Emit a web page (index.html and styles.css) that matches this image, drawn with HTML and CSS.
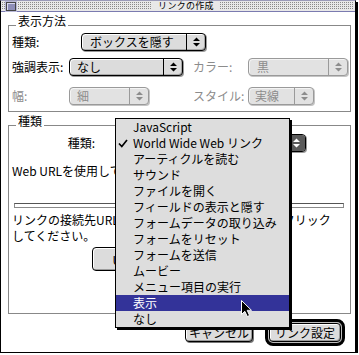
FILE: index.html
```html
<!DOCTYPE html>
<html lang="ja">
<head>
<meta charset="utf-8">
<title>リンクの作成</title>
<link rel="stylesheet" href="styles.css">
</head>
<body>
<div class="window">
  <div class="titlebar">
    <span class="dots dots-left"></span>
    <span class="closebox"></span>
    <span class="dots"></span>
    <span class="title">リンクの作成</span>
    <span class="dots"></span>
  </div>

  <div class="group g1">
    <div class="legend">表示方法</div>
    <div class="box box1">
      <div class="row">
        <span class="lbl w69">種類:</span>
        <div class="popup w125"><span class="pv">ボックスを隠す</span><span class="pa"><svg width="7" height="10" viewBox="0 0 7 10"><path d="M0 4 L3.5 0.5 L7 4Z M0 6 L3.5 9.5 L7 6Z"/></svg></span></div>
      </div>
      <div class="row r2">
        <span class="lbl w57">強調表示:</span>
        <div class="popup w114"><span class="pv pv7">なし</span><span class="pa"><svg width="7" height="10" viewBox="0 0 7 10"><path d="M0 4 L3.5 0.5 L7 4Z M0 6 L3.5 9.5 L7 6Z"/></svg></span></div>
        <span class="lbl dis-t w55 ml10">カラー:</span>
        <div class="popup dis w100"><span class="pv">黒</span><span class="pa"><svg width="7" height="10" viewBox="0 0 7 10"><path d="M0 4 L3.5 0.5 L7 4Z M0 6 L3.5 9.5 L7 6Z"/></svg></span></div>
      </div>
      <div class="row r3">
        <span class="lbl dis-t w57">幅:</span>
        <div class="popup dis w80"><span class="pv pv7">細</span><span class="pa"><svg width="7" height="10" viewBox="0 0 7 10"><path d="M0 4 L3.5 0.5 L7 4Z M0 6 L3.5 9.5 L7 6Z"/></svg></span></div>
        <span class="lbl dis-t w55 ml44">スタイル:</span>
        <div class="popup dis w66"><span class="pv pv6">実線</span><span class="pa"><svg width="7" height="10" viewBox="0 0 7 10"><path d="M0 4 L3.5 0.5 L7 4Z M0 6 L3.5 9.5 L7 6Z"/></svg></span></div>
      </div>
    </div>
  </div>

  <div class="group g2">
    <div class="legend">種類</div>
    <div class="box box2">
      <div class="row">
        <span class="lbl lbl-r">種類:</span>
        <div class="popup pressed w190"><span class="pv">World Wide Web リンク</span><span class="pa"><svg width="7" height="10" viewBox="0 0 7 10"><path d="M0 4 L3.5 0.5 L7 4Z M0 6 L3.5 9.5 L7 6Z"/></svg></span></div>
      </div>
      <div class="desc">Web URLを使用してリンクを作成</div>
      <div class="field"></div>
      <div class="note">リンクの接続先URLを入力するか、[選択]ボタンをクリック<br>してください。</div>
      <div class="btn inner-btn">URLを編集...</div>
    </div>
  </div>

  <div class="bottom">
    <div class="btn cancel">キャンセル</div>
    <div class="ring"><div class="btn ok">リンク設定</div></div>
  </div>

  <div class="menu">
    <div class="mi"><span class="mk"></span>JavaScript</div>
    <div class="mi"><span class="mk"><svg width="10" height="9" viewBox="0 0 10 9"><polyline points="1,4.5 3.8,7.5 9,1" fill="none" stroke="#000" stroke-width="1.7"/></svg></span>World Wide Web リンク</div>
    <div class="mi"><span class="mk"></span>アーティクルを読む</div>
    <div class="mi"><span class="mk"></span>サウンド</div>
    <div class="mi"><span class="mk"></span>ファイルを開く</div>
    <div class="mi"><span class="mk"></span>フィールドの表示と隠す</div>
    <div class="mi"><span class="mk"></span>フォームデータの取り込み</div>
    <div class="mi"><span class="mk"></span>フォームをリセット</div>
    <div class="mi"><span class="mk"></span>フォームを送信</div>
    <div class="mi"><span class="mk"></span>ムービー</div>
    <div class="mi"><span class="mk"></span>メニュー項目の実行</div>
    <div class="mi sel"><span class="mk"></span>表示</div>
    <div class="mi"><span class="mk"></span>なし</div>
  </div>

  <svg class="cursor" width="13" height="19" viewBox="0 0 13 19"><path d="M1.5 1.5 V15.5 L4.8 12.3 L7.3 17.5 L9.6 16.5 L7.2 11.3 H11.5 Z" fill="#000" stroke="#fff" stroke-width="1" stroke-linejoin="miter"/></svg>
</div>
</body>
</html>
```

FILE: styles.css
```css
body {
  margin: 0;
  background: #fff;
  font-family: "Noto Sans CJK JP", "Noto Sans", sans-serif;
  font-size: 12px;
  color: #000;
}

.window {
  position: relative;
  box-sizing: border-box;
  width: 356px;
  height: 353px;
  border: 1px solid #000;
  border-top-color: #9a9ab8;
  box-shadow: 2px 2px 0 #000;
  background: #fff;
}

/* title bar */
.titlebar {
  display: flex;
  align-items: center;
  height: 10px;
  border-bottom: 1px solid #7b7bb0;
  background: #e8e8e8;
  padding: 0 1px;
}
.dots {
  flex: 1;
  height: 8px;
  background:
    linear-gradient(90deg, transparent 1px, #e8e8e8 1px) 0 0 / 2px 2px,
    linear-gradient(#8a8a8a 1px, #e8e8e8 1px) 0 0 / 2px 2px;
}
.dots-left {
  flex: 0 0 3px;
}
.closebox {
  box-sizing: border-box;
  width: 10px;
  height: 9px;
  margin: 0 2px 0 1px;
  border: 1px solid #444;
  background: #8e8eb8;
  box-shadow: inset 1px 1px 0 #d8d8ee, 0 0 0 1px #b8b8d8;
}
.title {
  padding: 0 6px;
  font-size: 9px;
  line-height: 10px;
  height: 10px;
  letter-spacing: 0.3px;
}

/* group boxes */
.group {
  margin: 2px 4px 0 7px;
}
.legend {
  position: relative;
  width: fit-content;
  margin-left: 8px;
  margin-bottom: -2px;
  padding: 0 2px;
  line-height: 13px;
  background: #fff;
}
.box {
  box-sizing: border-box;
  border: 1px solid #888;
}
.box1 {
  height: 87px;
  padding: 7px 0 0 3px;
}
.box2 {
  height: 189px;
  padding-top: 8px;
}

.row {
  display: flex;
  align-items: center;
  height: 18px;
}
.r2 { margin-top: 7px; }
.r3 { margin-top: 11px; }

.lbl {
  flex: none;
  white-space: nowrap;
  line-height: 18px;
}
.lbl-r {
  box-sizing: border-box;
  width: 87px;
  padding-right: 1px;
  text-align: right;
  margin-right: 20px;
}
.dis-t { color: #8c8c8c; }
.w69 { width: 69px; }
.w57 { width: 57px; }
.w55 { width: 55px; }
.ml10 { margin-left: 10px; }
.ml44 { margin-left: 44px; }

/* popup menus */
.popup {
  flex: none;
  box-sizing: border-box;
  display: flex;
  height: 18px;
  border: 1px solid #000;
  border-radius: 4px;
  background: #dcdcdc;
  box-shadow: inset 1px 1px 0 #fff, inset -1px -1px 0 #a8a8a8, 1px 1px 0 #9a9a9a;
}
.w125 { width: 125px; }
.w114 { width: 114px; }
.w100 { width: 100px; }
.w80 { width: 80px; }
.w66 { width: 66px; }
.w190 { width: 190px; }
.pv {
  flex: 1;
  padding-left: 8px;
  line-height: 16px;
  white-space: nowrap;
  overflow: hidden;
}
.pv7 { padding-left: 7px; }
.pv6 { padding-left: 6px; }
.pa {
  flex: none;
  width: 18px;
  border-left: 1px solid #000;
  display: flex;
  align-items: center;
  justify-content: center;
}
.pa svg { fill: currentColor; }
.popup.dis {
  border-color: #9a9a9a;
  color: #8c8c8c;
  background: #e2e2e2;
  box-shadow: inset 1px 1px 0 #f4f4f4, 1px 1px 0 #c4c4c4;
}
.popup.dis .pa { border-left-color: #9a9a9a; }
.popup.pressed .pa {
  background: #5a5a5a;
  color: #fff;
  border-radius: 0 3px 3px 0;
}

.desc {
  margin: 13px 0 0 3px;
  line-height: 12px;
  white-space: nowrap;
}
.field {
  box-sizing: border-box;
  width: 330px;
  height: 5px;
  margin: 26px 0 0 5px;
  border: 1px solid #8a8a8a;
  border-top-color: #555;
  background: #fff;
}
.note {
  margin: 4px 0 0 3px;
  line-height: 16px;
  white-space: nowrap;
}

/* buttons */
.btn {
  box-sizing: border-box;
  display: flex;
  align-items: center;
  justify-content: center;
  height: 19px;
  border: 1px solid #000;
  border-radius: 4px;
  background: #dcdcdc;
  box-shadow: inset 1px 1px 0 #fff, inset -1px -1px 0 #9a9a9a;
  white-space: nowrap;
}
.inner-btn {
  width: 110px;
  height: 24px;
  margin: 3px 0 0 83px;
}
.bottom {
  display: flex;
  justify-content: flex-end;
  align-items: center;
  gap: 12px;
  height: 27px;
  margin: 5px 10px 0 0;
}
.cancel {
  width: 68px;
  box-shadow: inset 1px 1px 0 #fff, inset -1px -1px 0 #9a9a9a, 1px 1px 0 #777;
}
.ring {
  border: 3px solid #000;
  border-radius: 8px;
  padding: 1px;
  background: #bdbdbd;
}
.ok { width: 72px; }

/* pop-up menu overlay */
.menu {
  position: absolute;
  left: 114px;
  top: 117px;
  box-sizing: border-box;
  width: 175px;
  border: 1px solid #000;
  background: #dddddd;
  box-shadow: 2px 2px 0 #000;
}
.mi {
  display: flex;
  align-items: center;
  height: 16px;
  padding-left: 2px;
  white-space: nowrap;
  line-height: 16px;
}
.mk {
  flex: none;
  width: 15px;
  display: flex;
  align-items: center;
}
.mi.sel {
  background: #333399;
  color: #fff;
}

.cursor {
  position: absolute;
  left: 239px;
  top: 298px;
}
```
